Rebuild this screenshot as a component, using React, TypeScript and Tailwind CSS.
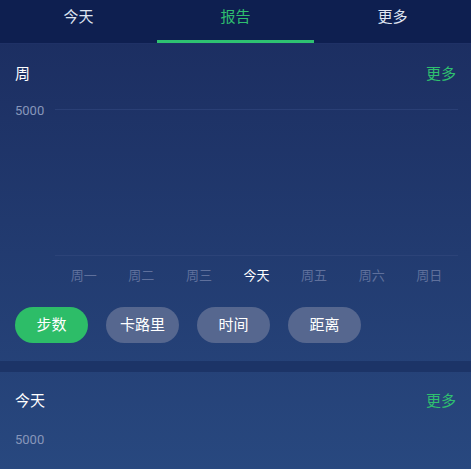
import React from 'react';

const tabs = ['今天', '报告', '更多'];
const days = ['周一', '周二', '周三', '今天', '周五', '周六', '周日'];
const metrics = ['步数', '卡路里', '时间', '距离'];

const SectionHeader: React.FC<{ title: string }> = ({ title }) => (
  <div className="flex items-center justify-between h-[24px]">
    <span className="text-[15px] text-white">{title}</span>
    <span className="text-[15px] text-[#2fbf6f]">更多</span>
  </div>
);

export default function App() {
  const active = 1;
  return (
    <div
      className="w-[471px] h-[469px] overflow-hidden bg-gradient-to-b from-[#1b2c5f] to-[#28487f]"
      style={{ fontFamily: '"Noto Sans CJK SC", "Noto Sans", sans-serif' }}
    >
      {/* Tabs */}
      <div className="flex h-[44px] bg-[#0e1f50] border-b border-[#1f3166]">
        {tabs.map((t, i) => (
          <div key={t} className="flex-1 flex flex-col items-center">
            <div
              className={`flex-1 flex items-center text-[15px] pb-[7px] ${
                i === active ? 'text-[#2fbf6f]' : 'text-[#dfe4f0]'
              }`}
            >
              {t}
            </div>
            <div className={`w-full h-[3px] ${i === active ? 'bg-[#2ec271]' : ''}`} />
          </div>
        ))}
      </div>

      {/* Weekly section */}
      <div className="px-[15px] pt-[17px]">
        <SectionHeader title="周" />
        <div className="flex items-center mt-[18px] h-[16px]">
          <span className="w-[40px] text-[13px] text-[#8796ba] font-['Roboto',sans-serif]">5000</span>
          <div className="flex-1 h-px bg-[#2a3f75] mr-[-2px] mb-[4px]" />
        </div>
        <div className="ml-[40px] mr-[-2px] h-[137px] border-b border-[#2c4378]" />
        <div className="flex ml-[40px] mr-[-2px] mt-[9px]">
          {days.map((d, i) => (
            <div
              key={d}
              className={`flex-1 text-center text-[13px] ${i === 3 ? 'text-white' : 'text-[#5f709c]'}`}
            >
              {d}
            </div>
          ))}
        </div>
        <div className="flex gap-[18px] mt-[22px] pb-[18px]">
          {metrics.map((m, i) => (
            <div
              key={m}
              className={`w-[73px] h-[36px] rounded-full flex items-center justify-center text-[15px] text-white ${
                i === 0 ? 'bg-[#2dbd68]' : 'bg-[#56678f]'
              }`}
            >
              {m}
            </div>
          ))}
        </div>
      </div>

      <div className="h-[11px] bg-[#1c3467]" />

      {/* Today section */}
      <div className="px-[15px] pt-[17px]">
        <SectionHeader title="今天" />
        <div className="flex items-center mt-[19px] h-[16px]">
          <span className="text-[13px] text-[#8796ba] font-['Roboto',sans-serif]">5000</span>
        </div>
      </div>
    </div>
  );
}
